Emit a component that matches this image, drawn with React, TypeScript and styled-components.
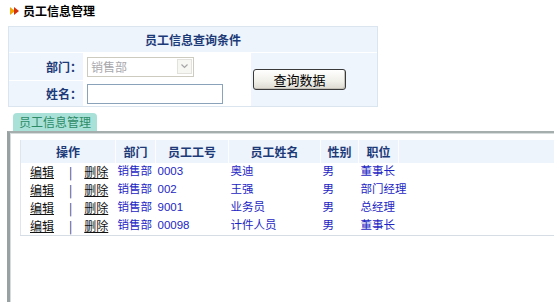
import React from 'react';
import styled, { createGlobalStyle } from 'styled-components';

const GlobalStyle = createGlobalStyle`
  html, body {
    margin: 0;
    padding: 0;
    background: #fff;
    overflow: hidden;
  }
  body {
    font-family: 'Noto Sans CJK SC', 'Liberation Sans', sans-serif;
    font-size: 12px;
    color: #000;
  }
`;

const Page = styled.div`
  width: 554px;
  height: 302px;
  overflow: hidden;
`;

const PageTitle = styled.div`
  display: flex;
  align-items: center;
  gap: 3px;
  height: 22px;
  padding-left: 10px;
  font-weight: bold;
  line-height: 1;
`;

const QueryPanel = styled.div`
  margin: 4px 0 0 8px;
  width: 368px;
  border: 1px solid #dbe5ef;
`;

const PanelHead = styled.div`
  height: 25px;
  display: flex;
  align-items: center;
  justify-content: center;
  background: #edf4fc;
  color: #1d3a78;
  font-weight: bold;
  border-bottom: 1px solid #fff;
`;

const PanelBody = styled.div`
  display: grid;
  grid-template-columns: 74px 166px 1fr;
  grid-template-rows: 27px 25px;
  gap: 1px;
  background: #fff;
`;

const LabelCell = styled.div`
  display: flex;
  align-items: center;
  justify-content: flex-end;
  padding-right: 1px;
  background: #eef5fc;
  color: #1d3a78;
  font-weight: bold;
`;

const FieldCell = styled.div`
  display: flex;
  align-items: center;
  padding-left: 3px;
  background: #fff;
`;

const ActionCell = styled.div`
  grid-column: 3;
  grid-row: 1 / span 2;
  display: flex;
  align-items: center;
  padding-left: 2px;
  background: #eef5fc;
`;

const SelectBox = styled.div`
  width: 107px;
  height: 20px;
  box-sizing: border-box;
  display: flex;
  align-items: center;
  justify-content: space-between;
  padding: 0 1px 0 3px;
  border: 1px solid #cdcbc0;
  background: #fff;
  color: #a9a8ac;
`;

const SelectArrow = styled.span`
  width: 15px;
  height: 15px;
  box-sizing: border-box;
  display: flex;
  align-items: center;
  justify-content: center;
  border: 1px solid #e2e1db;
  background: #f6f6f3;
`;

const TextInput = styled.input`
  width: 136px;
  height: 20px;
  box-sizing: border-box;
  margin: 0;
  border: 1px solid #8ba2bb;
  background: #fff;
  outline: none;
`;

const QueryButton = styled.button`
  width: 93px;
  height: 21px;
  padding: 0;
  border: 1px solid #3a3a3a;
  border-radius: 3px;
  background: linear-gradient(#ffffff, #f0efe8 60%, #dcdad0);
  box-shadow: inset -1px -1px 0 #c4c2b8;
  font-family: 'Noto Sans CJK SC', sans-serif;
  font-size: 13px;
  line-height: 1;
  color: #000;
`;

const Tab = styled.div`
  margin: 6px 0 0 13px;
  width: 84px;
  height: 18px;
  display: flex;
  align-items: center;
  justify-content: center;
  background: #a9e1d8;
  border-radius: 4px 4px 0 0;
  color: #2c8b66;
  line-height: 1;
`;

const MainBox = styled.div`
  margin-left: 7px;
  height: 171px;
  box-sizing: border-box;
  padding: 7px 0 0 10px;
  border-top: 2px solid #a5adad;
  border-left: 3px solid #98a2a2;
  box-shadow: inset 1px 1px 0 #d6dbdb;
  overflow: hidden;
`;

const Grid = styled.table`
  width: 560px;
  border-collapse: collapse;
  table-layout: fixed;
  border-left: 1px solid #dfe5ec;
  border-bottom: 1px solid #d6dde5;
`;

const HeadCell = styled.th`
  height: 23px;
  padding: 0;
  background: #edf4fc;
  color: #1d3a78;
  font-weight: bold;
  font-size: 12px;
  text-align: center;
  border-right: 1px solid #fbfdff;
`;

const Cell = styled.td`
  height: 18px;
  padding: 0 0 0 2px;
  font-family: 'Liberation Sans', 'Noto Sans CJK SC', sans-serif;
  font-size: 11.5px;
  line-height: 1;
  color: #1d26c4;
  white-space: nowrap;
`;

const OpCell = styled.td`
  height: 18px;
  padding: 0 0 0 9px;
`;

const OpGroup = styled.div`
  display: flex;
  align-items: center;
  font-size: 12px;
  line-height: 1;
`;

const OpLink = styled.a`
  color: #111;
  text-decoration: underline;
  cursor: pointer;
`;

const OpDivider = styled.span`
  margin: 0 12px 0 15px;
  color: #1d2a70;
`;

const rows = [
  { dept: '销售部', no: '0003', name: '奥迪', sex: '男', post: '董事长' },
  { dept: '销售部', no: '002', name: '王强', sex: '男', post: '部门经理' },
  { dept: '销售部', no: '9001', name: '业务员', sex: '男', post: '总经理' },
  { dept: '销售部', no: '00098', name: '计件人员', sex: '男', post: '董事长' },
];

const TitleIcon = () => (
  <svg width="10" height="8" viewBox="0 0 10 8">
    <polygon points="0,0 5,4 0,8" fill="#f5a300" />
    <polygon points="4,0 9,4 4,8" fill="#d4300c" />
  </svg>
);

const App: React.FC = () => (
  <Page>
    <GlobalStyle />
    <PageTitle>
      <TitleIcon />
      员工信息管理
    </PageTitle>

    <QueryPanel>
      <PanelHead>员工信息查询条件</PanelHead>
      <PanelBody>
        <LabelCell>部门：</LabelCell>
        <FieldCell>
          <SelectBox>
            销售部
            <SelectArrow>
              <svg width="7" height="5" viewBox="0 0 7 5">
                <polyline points="0.5,0.5 3.5,3.5 6.5,0.5" fill="none" stroke="#a6a6a6" strokeWidth="1.2" />
              </svg>
            </SelectArrow>
          </SelectBox>
        </FieldCell>
        <ActionCell>
          <QueryButton>查询数据</QueryButton>
        </ActionCell>
        <LabelCell>姓名：</LabelCell>
        <FieldCell>
          <TextInput />
        </FieldCell>
      </PanelBody>
    </QueryPanel>

    <Tab>员工信息管理</Tab>
    <MainBox>
      <Grid>
        <colgroup>
          <col style={{ width: 95 }} />
          <col style={{ width: 40 }} />
          <col style={{ width: 73 }} />
          <col style={{ width: 92 }} />
          <col style={{ width: 38 }} />
          <col style={{ width: 40 }} />
          <col />
        </colgroup>
        <thead>
          <tr>
            <HeadCell>操作</HeadCell>
            <HeadCell>部门</HeadCell>
            <HeadCell>员工工号</HeadCell>
            <HeadCell>员工姓名</HeadCell>
            <HeadCell>性别</HeadCell>
            <HeadCell>职位</HeadCell>
            <HeadCell />
          </tr>
        </thead>
        <tbody>
          {rows.map((r, i) => (
            <tr key={i}>
              <OpCell>
                <OpGroup>
                  <OpLink>编辑</OpLink>
                  <OpDivider>|</OpDivider>
                  <OpLink>删除</OpLink>
                </OpGroup>
              </OpCell>
              <Cell>{r.dept}</Cell>
              <Cell>{r.no}</Cell>
              <Cell>{r.name}</Cell>
              <Cell>{r.sex}</Cell>
              <Cell>{r.post}</Cell>
              <Cell />
            </tr>
          ))}
        </tbody>
      </Grid>
    </MainBox>
  </Page>
);

export default App;
